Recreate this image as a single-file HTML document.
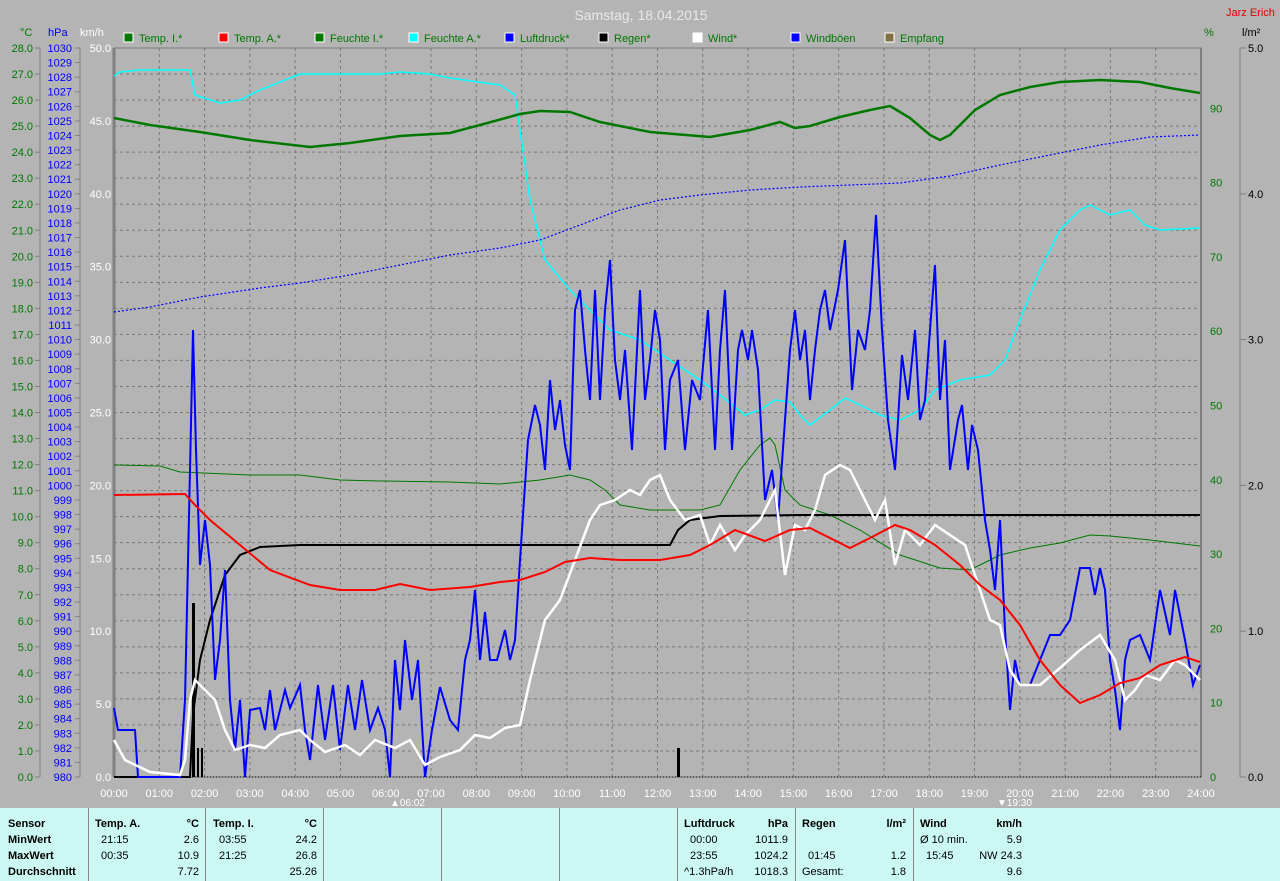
<!DOCTYPE html>
<html><head><meta charset="utf-8">
<style>
body{margin:0;width:1280px;height:881px;background:#b4b4b4;overflow:hidden;font-family:"Liberation Sans",sans-serif;}
svg{position:absolute;left:0;top:0}
.panel{position:absolute;left:0;top:808px;width:1280px;height:73px;background:#ccf8f4;font-size:11px;color:#000}
.panel div{position:absolute;white-space:nowrap}
.b{font-weight:bold}
.v{position:absolute;top:0;width:1px;height:73px;background:#888}
</style></head><body>
<svg id="s" width="1280" height="808" font-family="Liberation Sans, sans-serif" font-size="11"></svg>
<div class="panel" id="p"></div>
<script>
const S=document.getElementById('s');let h='';
const X0=114,X1=1201,Y0=48,Y1=777;
// grid
for(let i=1;i<28;i++){let y=Y0+i*(Y1-Y0)/28;h+=`<line x1="${X0}" x2="${X1}" y1="${y}" y2="${y}" stroke="#7a7a7a" stroke-dasharray="3,3"/>`;}
for(let i=1;i<24;i++){let x=X0+i*(X1-X0)/24;h+=`<line x1="${x}" x2="${x}" y1="${Y0}" y2="${Y1}" stroke="#7a7a7a" stroke-dasharray="3,3"/>`;}
h+=`<rect x="${X0}" y="${Y0}" width="${X1-X0}" height="${Y1-Y0}" fill="none" stroke="#7a7a7a"/>`;
h+=`<line x1="${X0}" x2="${X0}" y1="${Y0}" y2="${Y1}" stroke="#808080" stroke-width="3"/>`;
h+=`<line x1="${X1}" x2="${X1}" y1="${Y0}" y2="${Y1}" stroke="#808080" stroke-width="2"/>`;
h+=`<line x1="${X0}" x2="${X1}" y1="${Y1}" y2="${Y1}" stroke="#000" stroke-dasharray="1,2"/>`;
// left axes
h+=`<line x1="40" x2="40" y1="${Y0}" y2="${Y1}" stroke="#808080"/><line x1="80" x2="80" y1="${Y0}" y2="${Y1}" stroke="#808080"/>`;
for(let i=0;i<=28;i++){let y=Y0+i*(Y1-Y0)/28;h+=`<line x1="35" x2="40" y1="${y}" y2="${y}" stroke="#808080"/><text x="33" y="${y+4}" text-anchor="end" fill="#007800">${(28-i).toFixed(1)}</text>`;}
for(let i=0;i<=50;i++){let y=Y0+i*(Y1-Y0)/50;h+=`<line x1="75" x2="80" y1="${y}" y2="${y}" stroke="#808080"/><text x="72" y="${y+4}" text-anchor="end" fill="#0000ff">${1030-i}</text>`;}
for(let i=0;i<=10;i++){let y=Y0+i*(Y1-Y0)/10;h+=`<text x="111" y="${y+4}" text-anchor="end" fill="#fff">${(50-i*5).toFixed(1)}</text>`;}
h+=`<text x="20" y="36" fill="#007800">°C</text><text x="48" y="36" fill="#0000ff">hPa</text><text x="80" y="36" fill="#fff">km/h</text>`;
// right axes
for(let i=0;i<=9;i++){let y=Y1-i*(Y1-Y0)/9.8;}
for(let i=0;i<=9;i++){let y=Y1-i*74.3;h+=`<text x="1210" y="${y+4}" fill="#007800">${i*10}</text>`;}
h+=`<line x1="1240" x2="1240" y1="${Y0}" y2="${Y1}" stroke="#808080"/>`;
for(let i=0;i<=5;i++){let y=Y1-i*(Y1-Y0)/5;h+=`<line x1="1240" x2="1246" y1="${y}" y2="${y}" stroke="#808080"/><text x="1248" y="${y+4}" fill="#000">${i.toFixed(1)}</text>`;}
h+=`<text x="1204" y="36" fill="#007800">%</text><text x="1242" y="36" fill="#000">l/m²</text>`;
// x labels
for(let i=0;i<=24;i++){let x=X0+i*(X1-X0)/24;h+=`<text x="${x}" y="797" text-anchor="middle" fill="#fff">${String(i).padStart(2,'0')}:00</text>`;}
h+=`<text x="390" y="806" fill="#fff" font-size="10">▲06:02</text><text x="997" y="806" fill="#fff" font-size="10">▼19:30</text>`;
// title & legend
h+=`<text x="641" y="20" text-anchor="middle" fill="#e8e8e8" font-size="14">Samstag, 18.04.2015</text><text x="1226" y="16" fill="#e00000">Jarz Erich</text>`;
const L=[[124,'#007800','Temp. I.*'],[219,'#ff0000','Temp. A.*'],[315,'#007800','Feuchte I.*'],[409,'#00ffff','Feuchte A.*'],[505,'#0000ff','Luftdruck*'],[599,'#000','Regen*'],[693,'#fff','Wind*'],[791,'#0000ff','Windböen'],[885,'#807040','Empfang']];
L.forEach(l=>{h+=`<rect x="${l[0]}" y="33" width="9" height="9" fill="${l[1]}" stroke="#fff"/><text x="${l[0]+15}" y="42" fill="#007800">${l[2]}</text>`;});
function pl(pts,c,w,extra){h+=`<polyline fill="none" stroke="${c}" stroke-width="${w}" ${extra||''} points="${pts}"/>`;}
pl("114,76 120,72 140,70 165,70 190,70 195,95 220,103 240,100 260,90 290,78 300,74 350,74 380,74 400,72 430,74 450,78 500,85 515,95 520,130 530,200 545,260 570,290 590,310 610,330 640,340 670,360 700,380 720,395 745,415 760,410 775,400 790,402 800,415 810,425 830,410 845,398 860,405 880,415 900,420 920,410 935,390 960,380 990,375 1005,360 1020,320 1040,270 1060,230 1080,210 1090,205 1110,215 1130,210 1145,225 1160,230 1200,228","#00ffff",1.5);
pl("114,465 160,466 180,472 250,475 300,475 340,480 380,481 450,482 500,484 540,480 570,475 590,480 605,490 620,505 650,510 700,510 720,505 740,470 760,445 770,438 775,445 785,490 800,505 830,515 860,530 900,555 940,568 970,570 1000,555 1030,548 1060,543 1090,535 1110,536 1150,540 1200,546","#007800",1);
pl("114,312 150,307 200,297 260,288 300,283 350,275 400,265 450,255 500,248 540,240 580,225 620,210 660,200 700,195 750,190 800,187 850,185 900,183 950,176 1000,165 1050,155 1100,145 1150,137 1200,135","#0000ff",1.2,'stroke-dasharray="2,2"');
pl("114,118 150,125 200,132 250,140 310,147 350,143 400,136 450,133 480,125 520,114 540,111 570,112 600,122 650,132 710,137 750,130 780,122 795,128 810,126 840,117 870,110 890,106 910,118 930,135 940,140 950,135 975,110 1000,95 1030,87 1060,82 1100,80 1140,82 1170,88 1200,93","#007800",2.5);
pl("114,777 190,777 193,715 200,660 210,620 225,575 240,555 260,547 300,545 400,545 670,545 678,530 690,520 720,516 800,515 1200,515","#000",2);
h+=`<rect x="192" y="603" width="3" height="174" fill="#000"/><rect x="197" y="748" width="2" height="29" fill="#000"/><rect x="201" y="748" width="2" height="29" fill="#000"/><rect x="677" y="748" width="3" height="29" fill="#000"/>`;
pl("114,708 118,730 135,730 138,777 180,777 185,700 190,470 193,330 196,450 200,565 205,520 210,565 215,680 220,640 225,570 230,700 235,750 240,700 245,777 250,710 260,708 265,730 270,690 275,730 285,690 290,708 300,685 305,730 310,760 318,685 325,740 333,685 340,750 348,685 355,730 362,680 370,730 378,708 385,730 390,777 395,660 400,710 405,640 412,700 418,660 425,777 432,730 440,687 450,720 458,730 465,660 470,640 475,590 480,660 485,612 490,660 497,660 505,630 510,660 515,640 520,560 528,440 535,405 540,425 545,470 550,380 555,430 560,400 565,445 570,470 575,310 580,290 585,350 590,400 595,290 600,400 605,310 610,260 615,360 620,400 625,350 632,450 640,290 645,400 650,360 655,310 660,340 665,450 670,380 678,360 685,450 692,380 700,400 708,310 715,450 720,350 725,290 732,450 738,350 742,330 748,360 752,330 758,370 765,500 772,470 778,520 785,420 790,350 795,310 800,360 805,330 810,400 815,350 820,310 825,290 830,330 838,290 845,240 852,390 858,330 865,350 870,310 876,215 882,330 888,420 895,470 902,355 908,400 915,330 920,420 925,400 930,330 935,265 940,400 945,340 950,470 958,420 962,405 968,470 972,425 978,450 985,520 990,550 995,590 1000,520 1005,630 1010,710 1015,660 1020,685 1030,685 1040,660 1050,635 1060,635 1070,620 1080,568 1090,568 1095,595 1100,568 1105,590 1110,660 1115,690 1120,730 1125,660 1130,640 1140,635 1150,660 1160,590 1170,635 1175,590 1185,640 1193,685 1200,665","#0000ff",2);
pl("114,740 125,760 150,772 180,775 185,760 190,700 195,680 205,690 215,700 225,730 235,750 250,745 265,748 280,735 300,730 310,740 325,752 345,745 360,755 375,740 395,748 410,740 425,765 440,757 460,750 475,735 490,738 505,728 520,725 530,680 545,620 560,600 575,560 590,520 600,505 615,500 630,490 640,495 650,480 660,475 670,500 685,520 700,515 710,545 720,525 735,550 745,535 760,520 775,490 785,575 795,525 805,530 815,510 825,475 840,465 850,470 860,490 875,520 885,500 895,565 905,530 920,545 935,525 950,535 965,545 980,590 990,620 1000,625 1010,670 1020,685 1040,685 1060,668 1080,650 1100,635 1115,660 1125,700 1135,690 1145,675 1160,680 1175,660 1185,665 1200,680","#fff",2.5);
pl("114,495 185,494 195,505 210,520 240,545 270,570 310,585 340,590 375,590 400,584 430,590 470,587 500,582 520,580 545,572 565,562 590,558 620,560 660,560 690,555 710,545 735,530 765,541 790,530 810,528 830,538 850,548 870,538 895,525 910,530 935,545 960,565 980,585 1000,600 1020,625 1040,660 1060,685 1080,703 1100,695 1120,683 1140,678 1160,665 1185,657 1200,662","#ff0000",2);
S.innerHTML=h;
// panel
const P=document.getElementById('p');let q='';
[88,205,323,441,559,677,795,913].forEach(x=>q+=`<div class="v" style="left:${x}px"></div>`);
const rows=[10,26,42,58];
function t(x,r,s,cls,right){q+=`<div class="${cls||''}" style="${right?'right:'+(1280-x)+'px':'left:'+x+'px'};top:${rows[r]}px">${s}</div>`;}
t(8,0,'Sensor','b');t(8,1,'MinWert','b');t(8,2,'MaxWert','b');t(8,3,'Durchschnitt','b');
t(95,0,'Temp. A.','b');t(199,0,'°C','b',1);t(101,1,'21:15');t(199,1,'2.6','',1);t(101,2,'00:35');t(199,2,'10.9','',1);t(199,3,'7.72','',1);
t(213,0,'Temp. I.','b');t(317,0,'°C','b',1);t(219,1,'03:55');t(317,1,'24.2','',1);t(219,2,'21:25');t(317,2,'26.8','',1);t(317,3,'25.26','',1);
t(684,0,'Luftdruck','b');t(788,0,'hPa','b',1);t(690,1,'00:00');t(788,1,'1011.9','',1);t(690,2,'23:55');t(788,2,'1024.2','',1);t(684,3,'^1.3hPa/h');t(788,3,'1018.3','',1);
t(802,0,'Regen','b');t(906,0,'l/m²','b',1);t(808,2,'01:45');t(906,2,'1.2','',1);t(802,3,'Gesamt:');t(906,3,'1.8','',1);
t(920,0,'Wind','b');t(1022,0,'km/h','b',1);t(920,1,'Ø 10 min.');t(1022,1,'5.9','',1);t(926,2,'15:45');t(1022,2,'NW 24.3','',1);t(1022,3,'9.6','',1);
P.innerHTML=q;
</script>
</body></html>
